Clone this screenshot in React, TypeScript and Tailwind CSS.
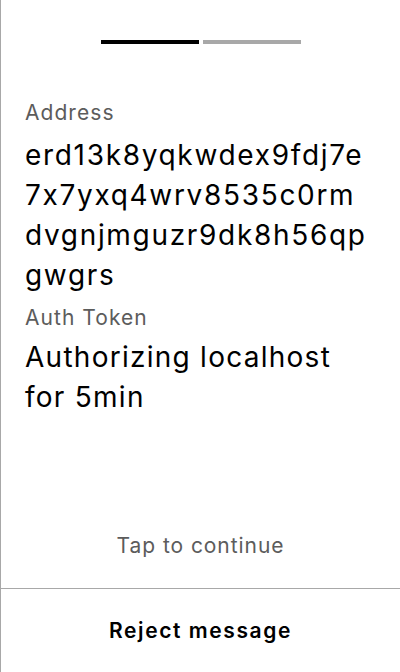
import React from 'react'

const addressLines = ['erd13k8yqkwdex9fdj7e', '7x7yxq4wrv8535c0rm', 'dvgnjmguzr9dk8h56qp', 'gwgrs']

const App = () => {
    return (
        <div className='h-[672px] w-[400px] border-l border-[#a8a8a8] bg-white flex flex-col font-["Inter",sans-serif]'>
            <div className='flex justify-center gap-1 pt-10'>
                <div className='h-1 w-[98px] bg-black'></div>
                <div className='h-1 w-[98px] bg-[#a8a8a8]'></div>
            </div>
            <div className='flex-1 flex flex-col pl-6 pr-4 pt-[55px]'>
                <p className='text-[21px] leading-[28px] tracking-[0.05em] text-[#5c5c5c]'>Address</p>
                <p className='mt-2 text-[28px] leading-[40px] tracking-[0.06em] text-black'>
                    {addressLines.map(line => (
                        <span key={line} className='block whitespace-nowrap'>{line}</span>
                    ))}
                </p>
                <p className='mt-[9px] text-[21px] leading-[28px] tracking-[0.05em] text-[#5c5c5c]'>Auth Token</p>
                <p className='mt-[5px] w-[340px] text-[28px] leading-[40px] tracking-[0.045em] text-black'>Authorizing localhost for 5min</p>
            </div>
            <div className='pb-7 text-center text-[21px] leading-[28px] tracking-[0.045em] text-[#5c5c5c]'>Tap to continue</div>
            <div className='border-t border-[#a8a8a8] h-[84px] flex items-center justify-center'>
                <span className='text-[21px] leading-[28px] tracking-[0.075em] font-semibold text-black'>Reject message</span>
            </div>
        </div>
    )
}

export default App
